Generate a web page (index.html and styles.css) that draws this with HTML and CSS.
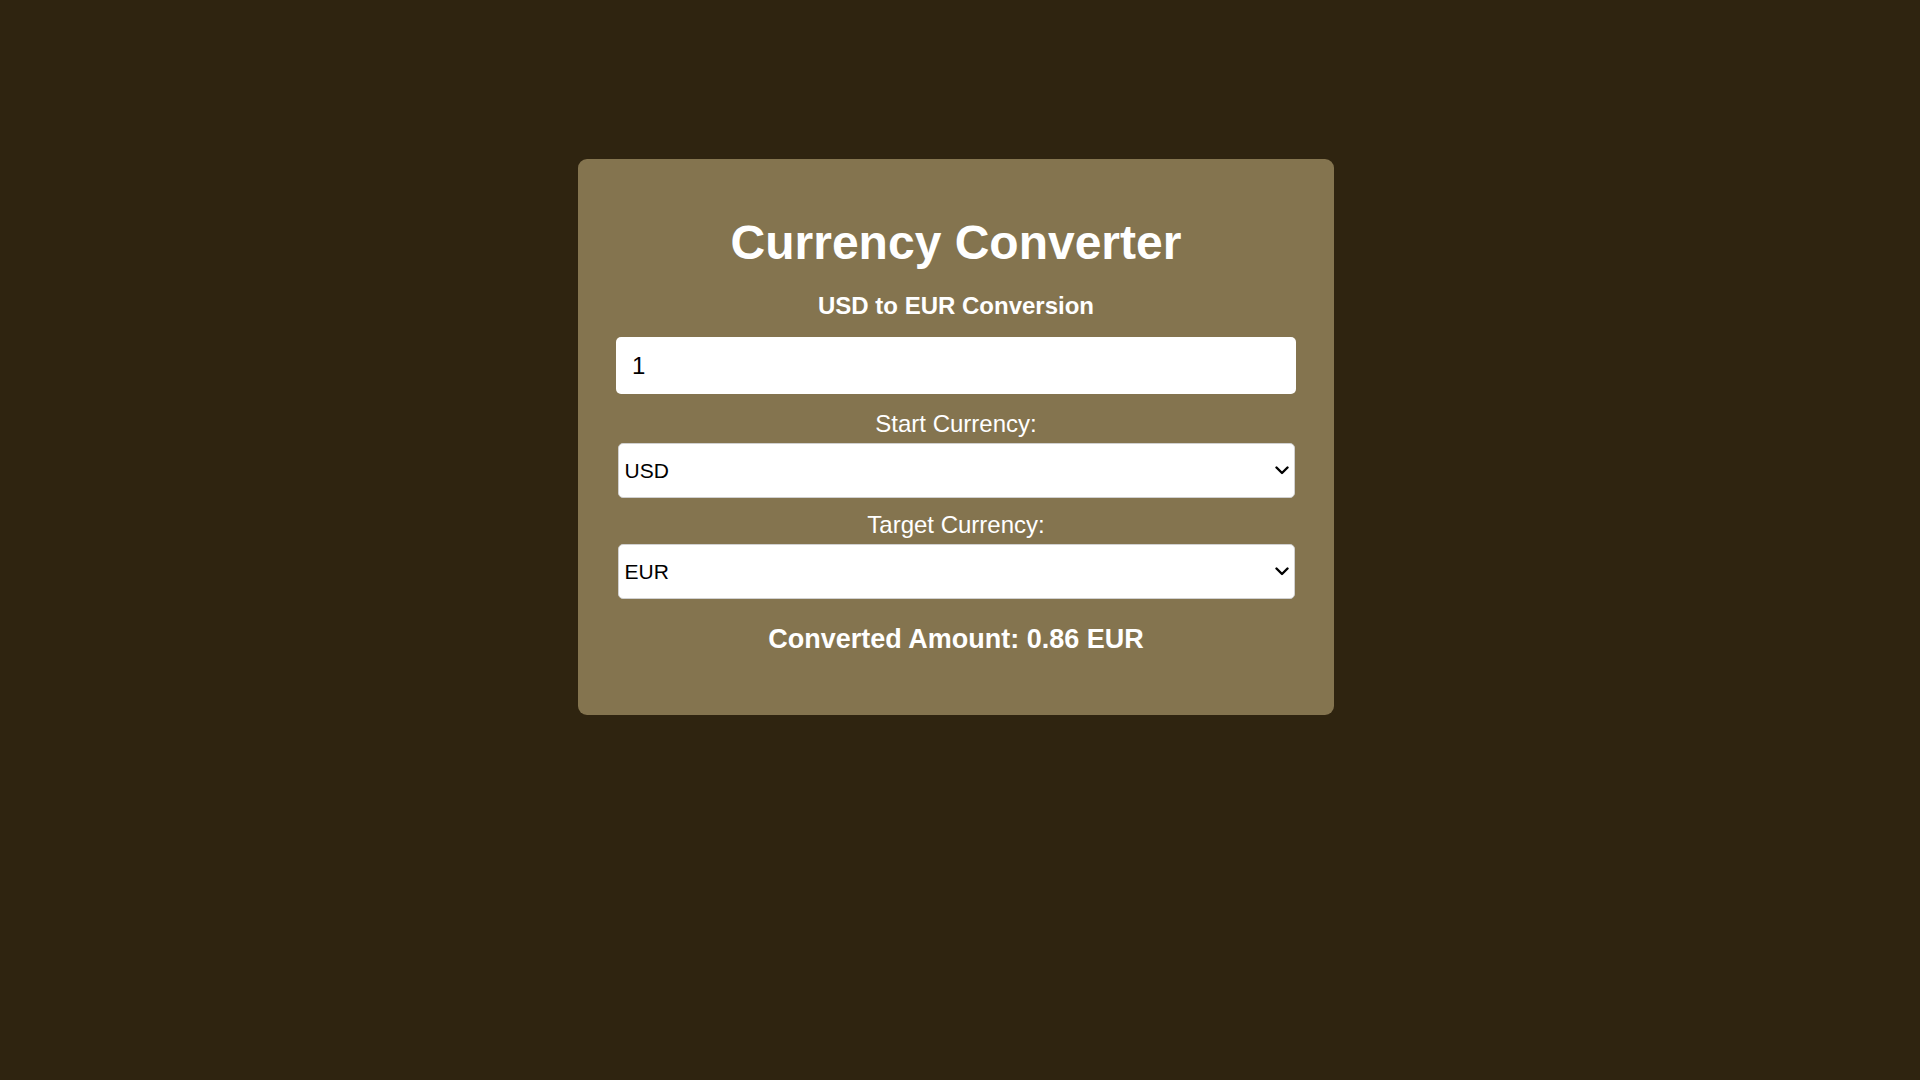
FILE: index.html
```html
<!DOCTYPE html>
<html lang="en">
<head>
<meta charset="utf-8">
<title>Currency Converter</title>
<link rel="stylesheet" href="styles.css">
</head>
<body>
<main class="page">
  <section class="card">
    <h1 class="title">Currency Converter</h1>
    <h2 class="subtitle">USD to EUR Conversion</h2>
    <input class="amount" type="number" value="1">
    <label class="label" for="from">Start Currency:</label>
    <select class="select" id="from">
      <option>USD</option>
      <option>EUR</option>
      <option>GBP</option>
    </select>
    <label class="label label-target" for="to">Target Currency:</label>
    <select class="select" id="to">
      <option>EUR</option>
      <option>USD</option>
      <option>GBP</option>
    </select>
    <p class="result">Converted Amount: 0.86 EUR</p>
  </section>
</main>
</body>
</html>
```

FILE: styles.css
```css
html, body {
  margin: 0;
  padding: 0;
  background: #2f2410;
  font-family: "Liberation Sans", Arial, sans-serif;
}

.page {
  min-height: 1080px;
  display: flex;
  justify-content: center;
  align-items: flex-start;
  padding-top: 159px;
  padding-right: 8px;
  box-sizing: border-box;
}

.card {
  width: 756px;
  box-sizing: border-box;
  background: #84744f;
  border-radius: 9px;
  padding: 56px 38px 61px;
  display: flex;
  flex-direction: column;
  align-items: center;
  color: #ffffff;
}

.title {
  margin: 0;
  font-size: 48px;
  line-height: 56px;
  font-weight: 700;
}

.subtitle {
  margin: 21px 0 0;
  font-size: 24px;
  line-height: 28px;
  font-weight: 700;
}

.amount {
  margin-top: 17px;
  width: 680px;
  height: 57px;
  box-sizing: border-box;
  border: none;
  border-radius: 5px;
  background: #ffffff;
  padding: 0 16px;
  font-family: "Liberation Sans", Arial, sans-serif;
  font-size: 24px;
  color: #000000;
  outline: none;
  -moz-appearance: textfield;
}

.amount::-webkit-inner-spin-button,
.amount::-webkit-outer-spin-button {
  -webkit-appearance: none;
  margin: 0;
}

.label {
  margin-top: 16px;
  font-size: 24px;
  line-height: 28px;
}

.label-target {
  margin-top: 13px;
}

.select {
  margin-top: 5px;
  width: 677px;
  height: 55px;
  box-sizing: border-box;
  border: 1px solid #d0d0d0;
  border-radius: 5px;
  -webkit-appearance: none;
  appearance: none;
  background-color: #ffffff;
  background-image: url("data:image/svg+xml;utf8,<svg xmlns='http://www.w3.org/2000/svg' width='14' height='9' viewBox='0 0 14 9'><path d='M1.5 1.5 L7 7 L12.5 1.5' fill='none' stroke='black' stroke-width='2.4' stroke-linecap='round' stroke-linejoin='round'/></svg>");
  background-repeat: no-repeat;
  background-position: right 5px center;
  background-size: 14px 9px;
  padding: 0 24px 0 6px;
  font-family: "Liberation Sans", Arial, sans-serif;
  font-size: 21px;
  color: #000000;
}

.result {
  margin: 25px 0 0;
  font-size: 27px;
  line-height: 30px;
  font-weight: 700;
}
```
